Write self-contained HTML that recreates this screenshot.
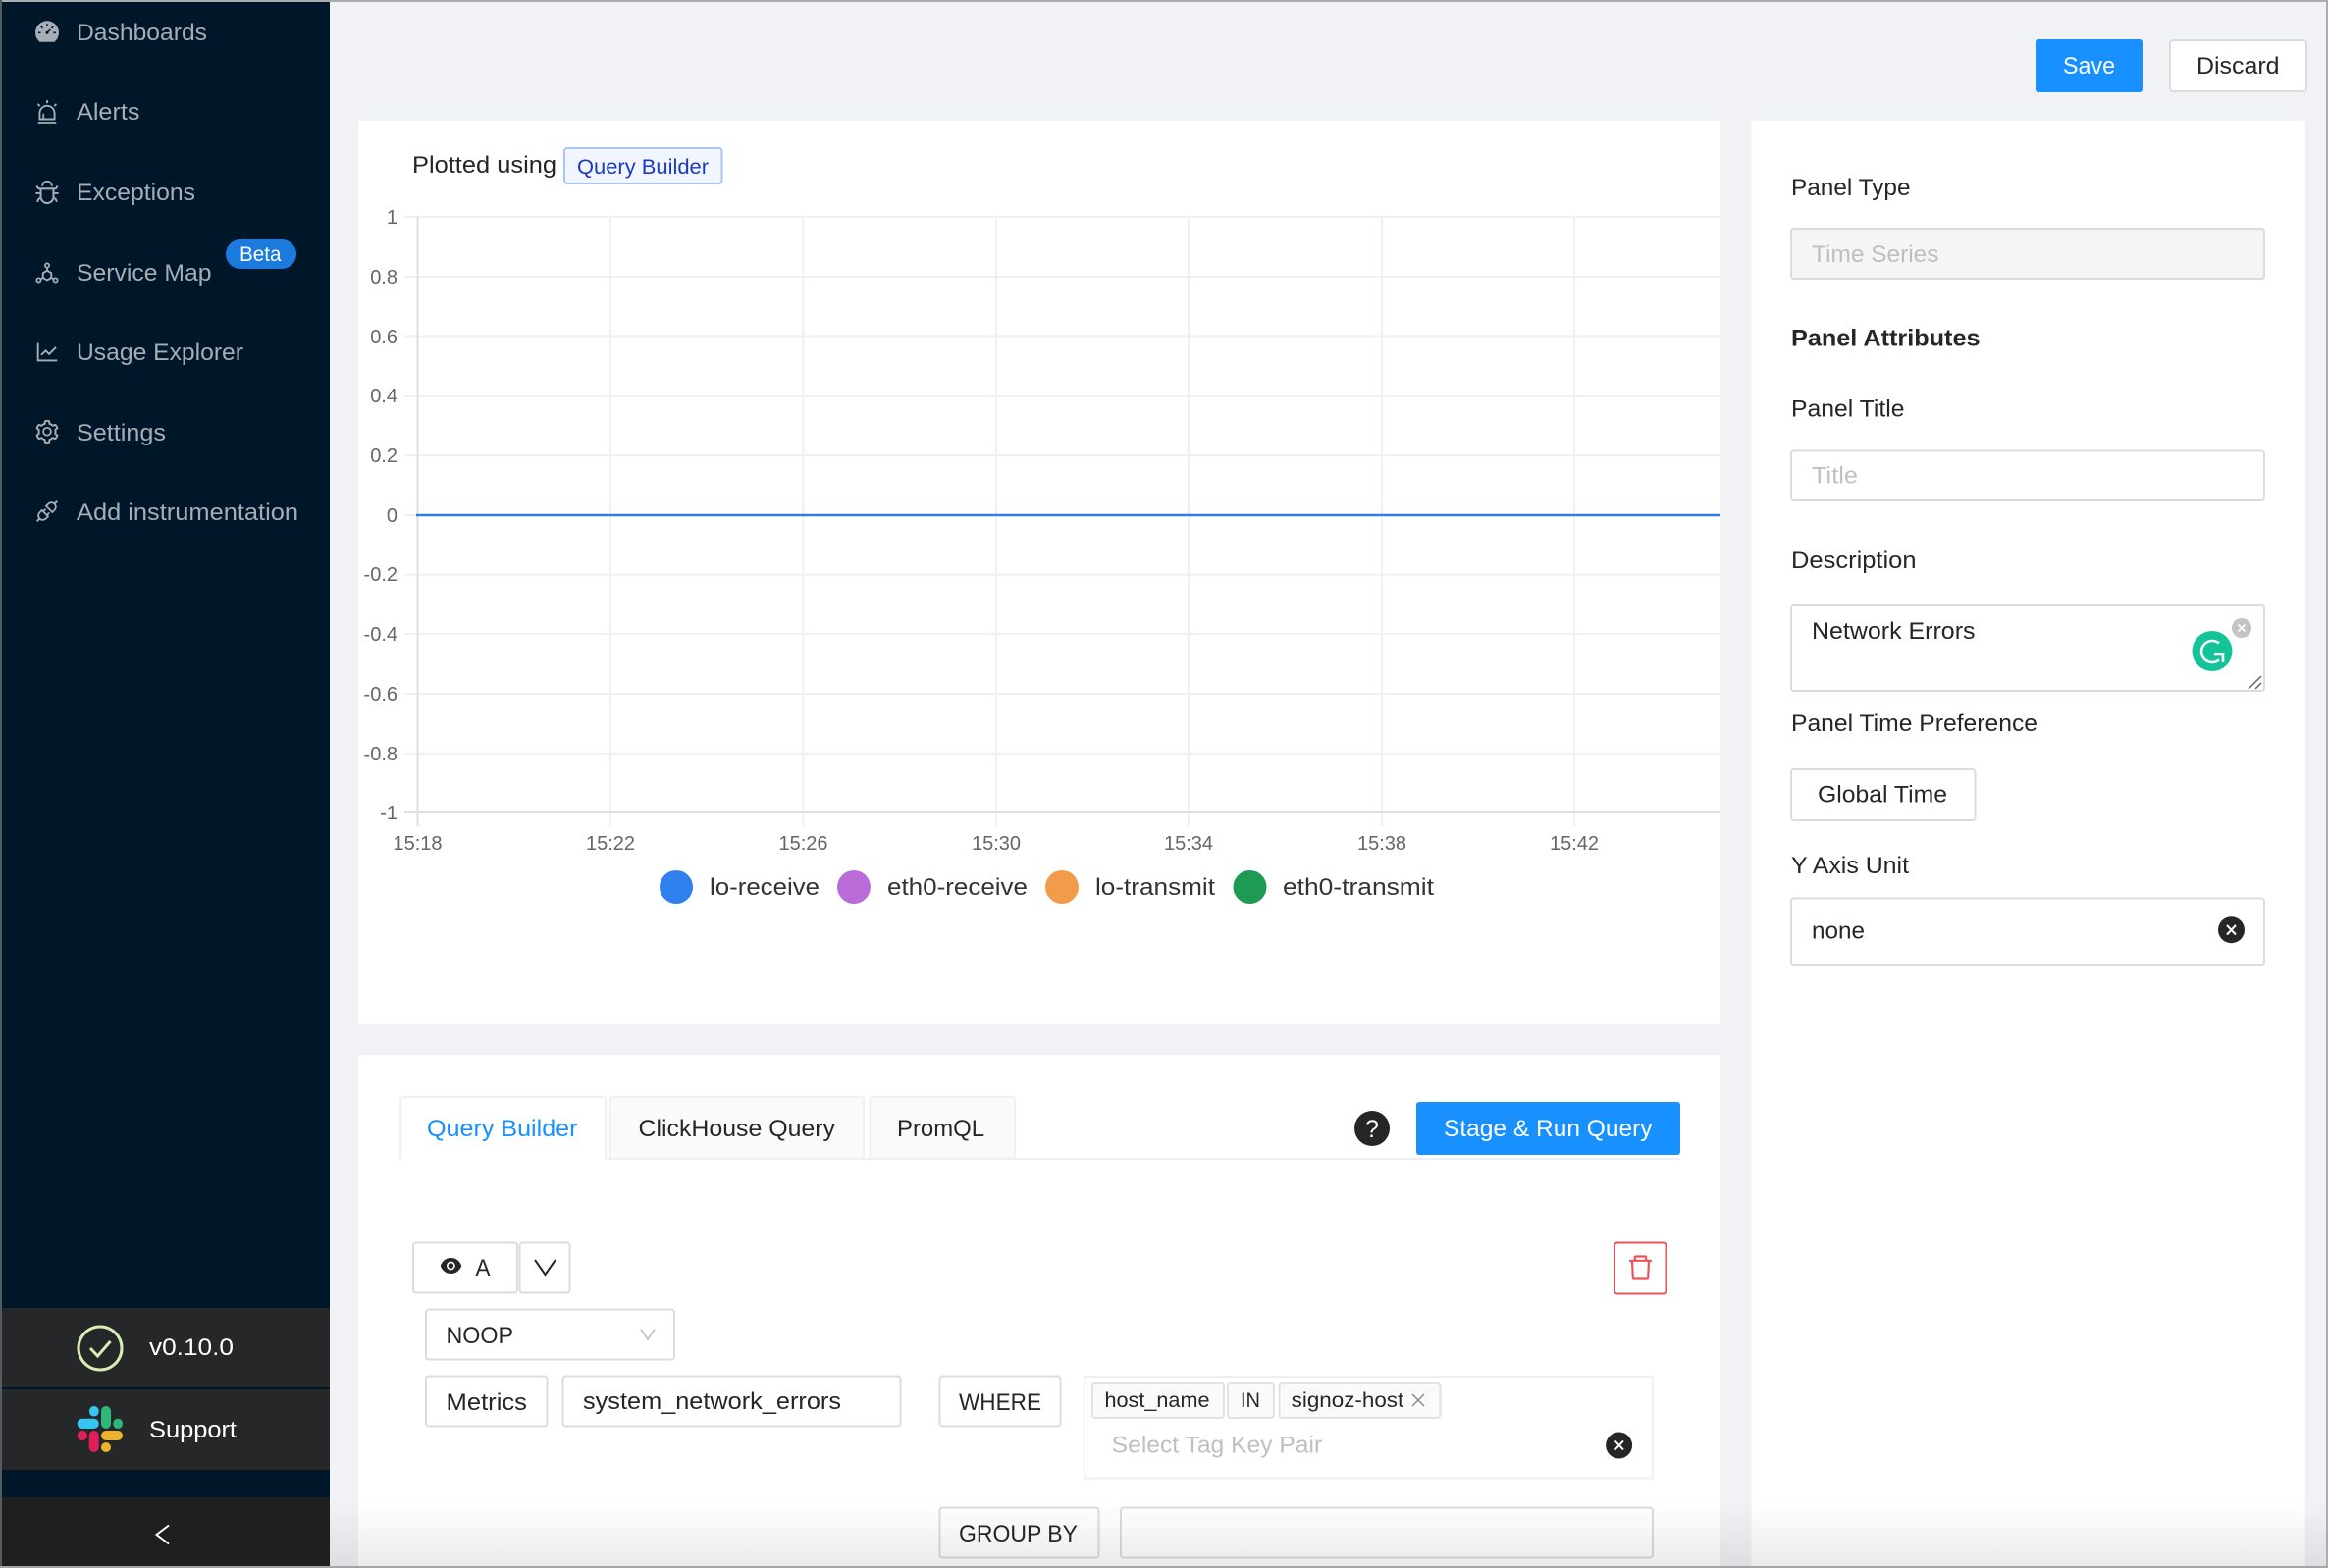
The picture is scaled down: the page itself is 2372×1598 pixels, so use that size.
<!DOCTYPE html>
<html lang="en">
<head>
<meta charset="utf-8">
<title>Panel Editor</title>
<style>
html,body{margin:0;padding:0;width:2372px;height:1598px;overflow:hidden;background:#f0f2f5}
svg{display:block}
text{font-family:"Liberation Sans",sans-serif;font-size:24px;fill:#262626}
.nav{fill:#a6adb4}
.ax{font-size:20px;fill:#666}
.w{fill:#fff}
.ph{fill:#bfbfbf}
.tag{font-size:21.5px}
.b{fill:#fff;stroke:#dcdcdc;stroke-width:2}
.ic{fill:#a6adb4}
</style>
</head>
<body>
<svg xmlns="http://www.w3.org/2000/svg" width="2372" height="1598" viewBox="0 0 2372 1598">
<defs>
<linearGradient id="fade" x1="0" y1="0" x2="0" y2="1"><stop offset="0" stop-color="#000" stop-opacity="0"/><stop offset="1" stop-color="#000" stop-opacity=".08"/></linearGradient>
</defs>
<rect width="2372" height="1598" fill="#f0f2f5"/>

<!-- sidebar -->
<rect x="2" y="2" width="334" height="1594" fill="#00172a"/>
<svg class="ic" x="36" y="20" width="24" height="24" viewBox="64 64 896 896"><path fill-rule="evenodd" d="M924.8 385.6a446.7 446.7 0 00-96-142.4 446.7 446.7 0 00-142.4-96C631.1 123.8 572.5 112 512 112s-119.1 11.8-174.4 35.2a446.7 446.7 0 00-142.4 96 446.7 446.7 0 00-96 142.4C75.8 440.9 64 499.5 64 560c0 132.7 58.3 257.7 159.9 343.1l1.7 1.4c5.8 4.8 13.1 7.5 20.6 7.5h531.7c7.5 0 14.8-2.7 20.6-7.5l1.7-1.4C901.7 817.7 960 692.7 960 560c0-60.5-11.9-119.1-35.2-174.4zM482 232c0-4.4 3.6-8 8-8h44c4.4 0 8 3.6 8 8v80c0 4.4-3.6 8-8 8h-44c-4.4 0-8-3.6-8-8v-80zM270 582c0 4.4-3.6 8-8 8h-80c-4.4 0-8-3.6-8-8v-44c0-4.4 3.6-8 8-8h80c4.4 0 8 3.6 8 8v44zm90.7-204.5l-31.1 31.1a8.03 8.03 0 01-11.3 0L261.7 352a8.03 8.03 0 010-11.3l31.1-31.1c3.1-3.1 8.2-3.1 11.3 0l56.6 56.6c3.1 3.1 3.1 8.2 0 11.3zm291.1 83.6l-84.5 84.5c5 18.7.2 39.4-14.5 54.1a55.95 55.95 0 01-79.2 0 55.95 55.95 0 010-79.2 55.87 55.87 0 0154.1-14.5l84.5-84.5c3.1-3.1 8.2-3.1 11.3 0l28.3 28.3c3.1 3.1 3.1 8.1 0 11.3zm43-52.4l-31.1-31.1a8.03 8.03 0 010-11.3l56.6-56.6c3.1-3.1 8.2-3.1 11.3 0l31.1 31.1c3.1 3.1 3.1 8.2 0 11.3l-56.6 56.6a8.03 8.03 0 01-11.3 0zM846 582c0 4.4-3.6 8-8 8h-80c-4.4 0-8-3.6-8-8v-44c0-4.4 3.6-8 8-8h80c4.4 0 8 3.6 8 8v44z"/></svg>
<svg class="ic" x="36" y="102" width="24" height="24" viewBox="64 64 896 896"><path d="M193 796c0 17.7 14.3 32 32 32h574c17.7 0 32-14.3 32-32V563c0-176.2-142.8-319-319-319S193 386.8 193 563v233zm72-233c0-136.4 110.6-247 247-247s247 110.6 247 247v193H404V585c0-5.5-4.5-10-10-10h-44c-5.5 0-10 4.5-10 10v171h-75V563zm-48.1-252.5l39.6-39.6c3.1-3.1 3.1-8.2 0-11.3l-67.9-67.9a8.03 8.03 0 00-11.3 0l-39.6 39.6a8.03 8.03 0 000 11.3l67.9 67.9c3.1 3.1 8.1 3.1 11.3 0zm669.6-79.2l-39.6-39.6a8.03 8.03 0 00-11.3 0l-67.9 67.9a8.03 8.03 0 000 11.3l39.6 39.6c3.1 3.1 8.2 3.1 11.3 0l67.9-67.9c3.1-3.2 3.1-8.2 0-11.3zM832 892H192c-17.7 0-32 14.3-32 32v24c0 4.4 3.6 8 8 8h688c4.4 0 8-3.6 8-8v-24c0-17.7-14.3-32-32-32zM484 180h56c4.4 0 8-3.6 8-8V76c0-4.4-3.6-8-8-8h-56c-4.4 0-8 3.6-8 8v96c0 4.4 3.6 8 8 8z"/></svg>
<svg class="ic" x="36" y="184" width="24" height="24" viewBox="64 64 896 896"><path d="M304 280h56c4.4 0 8-3.6 8-8 0-28.3 5.9-53.2 17.1-73.5 10.6-19.4 26-34.8 45.4-45.4C450.9 142 475.7 136 504 136h16c28.3 0 53.2 5.9 73.5 17.1 19.4 10.6 34.8 26 45.4 45.4C650 218.9 656 243.7 656 272c0 4.4 3.6 8 8 8h56c4.4 0 8-3.6 8-8 0-40-8.8-76.7-25.9-108.1a184.31 184.31 0 00-74-74C596.7 72.8 560 64 520 64h-16c-40 0-76.7 8.8-108.1 25.9a184.31 184.31 0 00-74 74C304.8 195.3 296 232 296 272c0 4.4 3.6 8 8 8z"/><path d="M940 512H792V412c76.8 0 139-62.2 139-139 0-4.4-3.6-8-8-8h-60c-4.4 0-8 3.6-8 8a63 63 0 01-63 63H232a63 63 0 01-63-63c0-4.4-3.6-8-8-8h-60c-4.4 0-8 3.6-8 8 0 76.8 62.2 139 139 139v100H84c-4.4 0-8 3.6-8 8v56c0 4.4 3.6 8 8 8h148v96c0 6.5.2 13 .7 19.3C164.1 728.6 116 796.7 116 876c0 4.4 3.6 8 8 8h56c4.4 0 8-3.6 8-8 0-44.2 23.9-82.9 59.6-103.7a273 273 0 0022.7 49c24.3 41.5 59 76.2 100.5 100.5S460.5 960 512 960s99.8-13.9 141.3-38.2a281.38 281.38 0 00123.2-149.5A120 120 0 01836 876c0 4.4 3.6 8 8 8h56c4.4 0 8-3.6 8-8 0-79.3-48.1-147.4-116.7-176.7.4-6.4.7-12.8.7-19.3v-96h148c4.4 0 8-3.6 8-8v-56c0-4.4-3.6-8-8-8zM716 680c0 36.8-9.7 72-27.8 102.9-17.7 30.3-43 55.6-73.3 73.3C584 874.3 548.8 884 512 884s-72-9.7-102.9-27.8c-30.3-17.7-55.6-43-73.3-73.3A202.75 202.75 0 01308 680V412h408v268z"/></svg>
<svg class="ic" x="36" y="266" width="24" height="24" viewBox="64 64 896 896"><path d="M888.3 693.2c-42.5-24.6-94.3-18-129.2 12.8l-53-30.7V523.6c0-15.7-8.4-30.3-22-38.1l-136-78.3v-67.1c44.2-15 76-56.8 76-106.1 0-61.9-50.1-112-112-112s-112 50.1-112 112c0 49.3 31.8 91.1 76 106.1v67.1l-136 78.3c-13.6 7.8-22 22.4-22 38.1v151.6l-53 30.7c-34.9-30.8-86.8-37.4-129.2-12.8-53.5 31-71.7 99.4-41 152.9 30.8 53.5 98.9 71.9 152.2 41 42.5-24.6 62.7-73 53.6-118.8l48.7-28.3 140.6 81c6.8 3.9 14.4 5.9 22 5.9s15.2-2 22-5.9L674.5 740l48.7 28.3c-9.1 45.7 11.2 94.2 53.6 118.8 53.3 30.9 121.5 12.6 152.2-41 30.8-53.6 12.6-122-40.7-152.9zm-673 138.4a47.6 47.6 0 01-65.2-17.6c-13.2-22.9-5.4-52.3 17.5-65.5a47.6 47.6 0 0165.2 17.6c13.2 22.9 5.4 52.3-17.5 65.5zM464 234a48.01 48.01 0 0196 0 48.01 48.01 0 01-96 0zm170 446.2l-122 70.3-122-70.3V539.8l122-70.3 122 70.3v140.4zm239 133.9c-13.2 22.9-42.4 30.8-65.2 17.6-22.8-13.2-30.7-42.6-17.5-65.5s42.4-30.8 65.2-17.6c22.9 13.2 30.7 42.5 17.5 65.5z"/></svg>
<svg class="ic" x="36" y="347" width="24" height="24" viewBox="64 64 896 896"><path d="M888 792H200V168c0-4.4-3.6-8-8-8h-56c-4.4 0-8 3.6-8 8v688c0 4.4 3.6 8 8 8h752c4.4 0 8-3.6 8-8v-56c0-4.4-3.6-8-8-8zM305.8 637.7c3.1 3.1 8.1 3.1 11.3 0l138.3-137.6L583 628.5c3.1 3.1 8.2 3.1 11.3 0l275.4-275.3c3.1-3.1 3.1-8.2 0-11.3l-39.6-39.6a8.03 8.03 0 00-11.3 0l-230 229.9L461.4 404a8.03 8.03 0 00-11.3 0L266.3 586.7a8.03 8.03 0 000 11.3l39.5 39.7z"/></svg>
<svg class="ic" x="36" y="428" width="24" height="24" viewBox="64 64 896 896"><path d="M924.8 625.7l-65.5-56c3.1-19 4.7-38.4 4.7-57.8s-1.6-38.8-4.7-57.8l65.5-56a32.03 32.03 0 009.3-35.2l-.9-2.6a443.74 443.74 0 00-79.7-137.9l-1.8-2.1a32.12 32.12 0 00-35.1-9.5l-81.3 28.9c-30-24.6-63.5-44-99.7-57.6l-15.7-85a32.05 32.05 0 00-25.8-25.7l-2.7-.5c-52.1-9.4-106.9-9.4-159 0l-2.7.5a32.05 32.05 0 00-25.8 25.7l-15.8 85.4a351.86 351.86 0 00-99 57.4l-81.9-29.1a32 32 0 00-35.1 9.5l-1.8 2.1a446.02 446.02 0 00-79.7 137.9l-.9 2.6c-4.5 12.5-.8 26.5 9.3 35.2l66.3 56.6c-3.1 18.8-4.6 38-4.6 57.1 0 19.2 1.5 38.4 4.6 57.1L99 625.5a32.03 32.03 0 00-9.3 35.2l.9 2.6c18.1 50.4 44.9 96.9 79.7 137.9l1.8 2.1a32.12 32.12 0 0035.1 9.5l81.9-29.1c29.8 24.5 63.1 43.9 99 57.4l15.8 85.4a32.05 32.05 0 0025.8 25.7l2.7.5a449.4 449.4 0 00159 0l2.7-.5a32.05 32.05 0 0025.8-25.7l15.7-85a350 350 0 0099.7-57.6l81.3 28.9a32 32 0 0035.1-9.5l1.8-2.1c34.8-41.1 61.6-87.5 79.7-137.9l.9-2.6c4.5-12.3.8-26.3-9.3-35zM788.3 465.9c2.5 15.1 3.8 30.6 3.8 46.1s-1.3 31-3.8 46.1l-6.6 40.1 74.7 63.9a370.03 370.03 0 01-42.6 73.6L721 702.8l-31.4 25.8c-23.9 19.6-50.5 35-79.3 45.8l-38.1 14.3-17.9 97a377.5 377.5 0 01-85 0l-17.9-97.2-37.8-14.5c-28.5-10.8-55-26.2-78.7-45.7l-31.4-25.9-93.4 33.2c-17-22.9-31.2-47.6-42.6-73.6l75.5-64.5-6.5-40c-2.4-14.9-3.7-30.3-3.7-45.5 0-15.3 1.2-30.6 3.7-45.5l6.5-40-75.5-64.5c11.3-26.1 25.6-50.7 42.6-73.6l93.4 33.2 31.4-25.9c23.7-19.5 50.2-34.9 78.7-45.7l37.9-14.3 17.9-97.2c28.1-3.2 56.8-3.2 85 0l17.9 97 38.1 14.3c28.7 10.8 55.4 26.2 79.3 45.8l31.4 25.8 92.8-32.9c17 22.9 31.2 47.6 42.6 73.6L781.8 426l6.5 39.9zM512 326c-97.2 0-176 78.8-176 176s78.8 176 176 176 176-78.8 176-176-78.8-176-176-176zm79.2 255.2A111.6 111.6 0 01512 614c-29.9 0-58-11.7-79.2-32.8A111.6 111.6 0 01400 502c0-29.9 11.7-58 32.8-79.2C454 401.6 482.1 390 512 390c29.9 0 58 11.6 79.2 32.8A111.6 111.6 0 01624 502c0 29.9-11.7 58-32.8 79.2z"/></svg>
<svg class="ic" x="36" y="509" width="24" height="24" viewBox="64 64 896 896"><path d="M917.7 148.8l-42.4-42.4c-1.6-1.6-3.6-2.3-5.7-2.3s-4.1.8-5.7 2.3l-76.1 76.1a199.27 199.27 0 00-112.1-34.3c-51.2 0-102.4 19.5-141.5 58.6L432.3 308.7a8.03 8.03 0 000 11.3L704 591.7c1.6 1.6 3.6 2.3 5.7 2.3 2 0 4.1-.8 5.7-2.3l101.9-101.9c68.9-69 77-175.7 24.3-253.5l76.1-76.1c3.1-3.2 3.1-8.3 0-11.4zM769.1 441.7l-59.4 59.4-186.8-186.8 59.4-59.4c24.9-24.9 58.1-38.7 93.4-38.7 35.3 0 68.4 13.7 93.4 38.7 24.9 24.9 38.7 58.1 38.7 93.4 0 35.3-13.8 68.4-38.7 93.4zm-190.2 105a8.03 8.03 0 00-11.3 0L501 613.3 410.7 523l66.7-66.7c3.1-3.1 3.1-8.2 0-11.3L441 408.6a8.03 8.03 0 00-11.3 0L363 475.3l-43-43a7.85 7.85 0 00-5.7-2.3c-2 0-4.1.8-5.7 2.3L206.8 534.2c-68.9 69-77 175.7-24.3 253.5l-76.1 76.1a8.03 8.03 0 000 11.3l42.4 42.4c1.6 1.6 3.6 2.3 5.7 2.3s4.1-.8 5.7-2.3l76.1-76.1c33.7 22.9 72.9 34.3 112.1 34.3 51.2 0 102.4-19.5 141.5-58.6l101.9-101.9c3.1-3.1 3.1-8.2 0-11.3l-43-43 66.7-66.7c3.1-3.1 3.1-8.2 0-11.3l-36.6-36.2zM441.7 769.1a131.32 131.32 0 01-93.4 38.7c-35.3 0-68.4-13.7-93.4-38.7a131.32 131.32 0 01-38.7-93.4c0-35.3 13.7-68.4 38.7-93.4l59.4-59.4 186.8 186.8-59.4 59.4z"/></svg>

<text class="nav" x="78" y="41" textLength="133" lengthAdjust="spacingAndGlyphs">Dashboards</text>
<text class="nav" x="78" y="122" textLength="64.5" lengthAdjust="spacingAndGlyphs">Alerts</text>
<text class="nav" x="78" y="204" textLength="121" lengthAdjust="spacingAndGlyphs">Exceptions</text>
<text class="nav" x="78" y="286" textLength="137.5" lengthAdjust="spacingAndGlyphs">Service Map</text>
<text class="nav" x="78" y="367" textLength="170" lengthAdjust="spacingAndGlyphs">Usage Explorer</text>
<text class="nav" x="78" y="449" textLength="91" lengthAdjust="spacingAndGlyphs">Settings</text>
<text class="nav" x="78" y="530" textLength="226" lengthAdjust="spacingAndGlyphs">Add instrumentation</text>

<rect x="230" y="244" width="72" height="30" rx="15" fill="#1a7ade"/>
<text class="w" x="244" y="266" textLength="42.5" lengthAdjust="spacingAndGlyphs" style="font-size:21px">Beta</text>

<rect x="2" y="1333" width="334" height="81" fill="#262728"/>
<rect x="2" y="1416" width="334" height="82" fill="#262728"/>
<rect x="2" y="1526" width="334" height="70" fill="#1f1f1f"/>
<circle cx="102" cy="1374" r="22" fill="none" stroke="#d6eeb6" stroke-width="3"/>
<path d="M92 1374l7.5 8 13-15" fill="none" stroke="#d6eeb6" stroke-width="3"/>
<text class="w" x="152" y="1381" textLength="86" lengthAdjust="spacingAndGlyphs">v0.10.0</text>
<rect x="78.7" y="1445.7" width="22" height="10.3" rx="5" fill="#36c5f0"/>
<rect x="91" y="1433" width="9.7" height="10.5" rx="4.8" fill="#36c5f0"/>
<rect x="103" y="1433" width="10" height="23" rx="5" fill="#2eb67d"/>
<rect x="115.3" y="1445.7" width="9.7" height="10.3" rx="4.8" fill="#2eb67d"/>
<rect x="103" y="1458" width="22" height="10" rx="5" fill="#ecb22e"/>
<rect x="103" y="1470" width="10" height="10" rx="5" fill="#ecb22e"/>
<rect x="90.7" y="1458" width="10" height="22" rx="5" fill="#e01e5a"/>
<rect x="78.7" y="1458" width="10.3" height="10" rx="5" fill="#e01e5a"/>
<text class="w" x="152" y="1465" textLength="89" lengthAdjust="spacingAndGlyphs">Support</text>
<path d="M172 1554.500l-12.500 9.500 12.500 9.500" fill="none" stroke="#fff" stroke-width="2"/>

<!-- top actions -->
<rect x="2074" y="40" width="109" height="54" rx="3" fill="#1890ff"/>
<text class="w" x="2102" y="75" textLength="53" lengthAdjust="spacingAndGlyphs">Save</text>
<rect class="b" x="2211" y="41" width="139" height="52" rx="3"/>
<text x="2238" y="75" textLength="84.5" lengthAdjust="spacingAndGlyphs">Discard</text>

<!-- chart panel -->
<rect x="365" y="123" width="1388" height="921" fill="#fff"/>
<text x="420" y="176" textLength="147" lengthAdjust="spacingAndGlyphs">Plotted using</text>
<rect x="575" y="151" width="160.5" height="36" rx="3" fill="#f0f5ff" stroke="#a9c4f5" stroke-width="2"/>
<text class="tag" x="588" y="177" textLength="134" lengthAdjust="spacingAndGlyphs" style="fill:#1d39c4">Query Builder</text>

<g stroke="#f0f0f0" stroke-width="2">
<path d="M412 221H1752M412 282H1752M412 342.500H1752M412 404H1752M412 464H1752M412 525H425M412 585.500H1752M412 646H1752M412 707H1752M412 768H1752"/>
<path d="M622 221V842M818.500 221V842M1015 221V842M1211 221V842M1408 221V842M1604 221V842"/>
</g>
<path d="M425.500 221V842M412 828H1752" stroke="#dfdfdf" stroke-width="2" fill="none"/>
<path d="M424 525H1752" stroke="#2f7fe0" stroke-width="2.500"/>

<g>
<text class="ax" x="405" y="228" text-anchor="end">1</text>
<text class="ax" x="405" y="289" text-anchor="end">0.8</text>
<text class="ax" x="405" y="350" text-anchor="end">0.6</text>
<text class="ax" x="405" y="410" text-anchor="end">0.4</text>
<text class="ax" x="405" y="471" text-anchor="end">0.2</text>
<text class="ax" x="405" y="532" text-anchor="end">0</text>
<text class="ax" x="405" y="592" text-anchor="end">-0.2</text>
<text class="ax" x="405" y="653" text-anchor="end">-0.4</text>
<text class="ax" x="405" y="714" text-anchor="end">-0.6</text>
<text class="ax" x="405" y="775" text-anchor="end">-0.8</text>
<text class="ax" x="405" y="835" text-anchor="end">-1</text>
</g>
<text class="ax" x="425.5" y="866" text-anchor="middle">15:18</text>
<text class="ax" x="622" y="866" text-anchor="middle">15:22</text>
<text class="ax" x="818.5" y="866" text-anchor="middle">15:26</text>
<text class="ax" x="1015" y="866" text-anchor="middle">15:30</text>
<text class="ax" x="1211" y="866" text-anchor="middle">15:34</text>
<text class="ax" x="1408" y="866" text-anchor="middle">15:38</text>
<text class="ax" x="1604" y="866" text-anchor="middle">15:42</text>

<circle cx="689" cy="904" r="17" fill="#2f7fed"/>
<text x="723" y="912" textLength="112" lengthAdjust="spacingAndGlyphs" style="fill:#333">lo-receive</text>
<circle cx="870" cy="904" r="17" fill="#b96cd8"/>
<text x="904" y="912" textLength="143" lengthAdjust="spacingAndGlyphs" style="fill:#333">eth0-receive</text>
<circle cx="1082" cy="904" r="17" fill="#f29b4a"/>
<text x="1116" y="912" textLength="122" lengthAdjust="spacingAndGlyphs" style="fill:#333">lo-transmit</text>
<circle cx="1273.5" cy="904" r="17" fill="#1f9a55"/>
<text x="1307" y="912" textLength="154" lengthAdjust="spacingAndGlyphs" style="fill:#333">eth0-transmit</text>

<!-- query panel -->
<rect x="365" y="1075" width="1388" height="521" fill="#fff"/>
<path d="M408 1181H1712" stroke="#f0f0f0" stroke-width="2"/>
<rect x="408" y="1118" width="209" height="70" rx="3" fill="#fff" stroke="#f0f0f0" stroke-width="2"/>
<rect x="402" y="1182" width="218" height="8" fill="#fff"/>
<rect x="622" y="1118" width="258" height="63" rx="3" fill="#fafafa" stroke="#f0f0f0" stroke-width="2"/>
<rect x="886.5" y="1118" width="147.5" height="63" rx="3" fill="#fafafa" stroke="#f0f0f0" stroke-width="2"/>
<text x="435" y="1158" textLength="153.5" lengthAdjust="spacingAndGlyphs" style="fill:#1890ff">Query Builder</text>
<text x="650.5" y="1158" textLength="200.5" lengthAdjust="spacingAndGlyphs">ClickHouse Query</text>
<text x="914" y="1158" textLength="89" lengthAdjust="spacingAndGlyphs">PromQL</text>
<circle cx="1398" cy="1150" r="18" fill="#262626"/>
<text class="w" x="1398" y="1159" text-anchor="middle" style="font-size:25px">?</text>
<rect x="1443" y="1123" width="269" height="54" rx="3" fill="#1890ff"/>
<text class="w" x="1471" y="1158" textLength="212.5" lengthAdjust="spacingAndGlyphs">Stage &amp; Run Query</text>

<rect class="b" x="421" y="1266.5" width="106" height="51" rx="3"/>
<svg x="448.5" y="1279" width="22" height="22" viewBox="64 64 896 896"><path fill="#262626" d="M396 512a112 112 0 10224 0 112 112 0 10-224 0zm546.2-25.8C847.4 286.5 704.1 186 512 186c-192.2 0-335.4 100.5-430.2 300.3a60.3 60.3 0 000 51.5C176.6 737.5 319.9 838 512 838c192.2 0 335.4-100.5 430.2-300.3 7.7-16.2 7.7-35 0-51.5zM508 688c-97.2 0-176-78.8-176-176s78.8-176 176-176 176 78.8 176 176-78.8 176-176 176z"/></svg>
<text x="484.5" y="1300" textLength="15" lengthAdjust="spacingAndGlyphs">A</text>
<rect class="b" x="529.5" y="1266.5" width="51" height="51" rx="3"/>
<path d="M545 1284l10.500 15 10.500-15" fill="none" stroke="#262626" stroke-width="2"/>
<rect x="1645" y="1266.5" width="52.5" height="52" rx="3" fill="#fff" stroke="#e8545a" stroke-width="2"/>
<svg x="1656" y="1276" width="31" height="31" viewBox="0 0 1024 1024"><path fill="#e8545a" d="M360 184h-8c4.4 0 8-3.6 8-8v8h304v-8c0 4.4 3.6 8 8 8h-8v72h72v-80c0-35.3-28.7-64-64-64H352c-35.3 0-64 28.700-64 64v80h72v-72zm504 72H160c-17.700 0-32 14.300-32 32v32c0 4.400 3.600 8 8 8h60.400l24.700 523c1.600 34.100 29.800 61 63.900 61h454c34.200 0 62.300-26.800 63.900-61l24.700-523H888c4.400 0 8-3.600 8-8v-32c0-17.700-14.300-32-32-32zM731.300 840H292.700l-24.200-512h487l-24.200 512z"/></svg>

<rect class="b" x="434" y="1334.5" width="253" height="51" rx="3"/>
<text x="454.5" y="1369" textLength="68.5" lengthAdjust="spacingAndGlyphs">NOOP</text>
<path d="M653 1354.500l7 10.500 7-10.500" fill="none" stroke="#bfbfbf" stroke-width="1.600"/>

<rect class="b" x="434" y="1402.5" width="123.5" height="51" rx="3"/>
<text x="454.5" y="1437" textLength="82.5" lengthAdjust="spacingAndGlyphs">Metrics</text>
<rect class="b" x="573.5" y="1402.5" width="344" height="51" rx="3"/>
<text x="594" y="1436" textLength="263" lengthAdjust="spacingAndGlyphs">system_network_errors</text>
<rect class="b" x="957.5" y="1402.5" width="123" height="51" rx="3"/>
<text x="977" y="1437" textLength="84" lengthAdjust="spacingAndGlyphs">WHERE</text>

<rect x="1105" y="1403" width="579" height="103.5" fill="#fff" stroke="#f0f0f0" stroke-width="2"/>
<rect x="1113" y="1409" width="134" height="36" rx="3" fill="#fafafa" stroke="#e2e2e2" stroke-width="2"/>
<text class="tag" x="1125.5" y="1434" textLength="107" lengthAdjust="spacingAndGlyphs">host_name</text>
<rect x="1251" y="1409" width="47" height="36" rx="3" fill="#fafafa" stroke="#e2e2e2" stroke-width="2"/>
<text class="tag" x="1264" y="1434" textLength="20" lengthAdjust="spacingAndGlyphs">IN</text>
<rect x="1303.5" y="1409" width="164" height="36" rx="3" fill="#fafafa" stroke="#e2e2e2" stroke-width="2"/>
<text class="tag" x="1315.7" y="1434" textLength="114.5" lengthAdjust="spacingAndGlyphs">signoz-host</text>
<path d="M1439 1421l12 12M1451 1421l-12 12" stroke="#8c8c8c" stroke-width="1.500"/>
<text class="ph" x="1132.7" y="1480.5" textLength="214.5" lengthAdjust="spacingAndGlyphs">Select Tag Key Pair</text>
<circle cx="1649.6" cy="1473" r="13.5" fill="#262626"/>
<path d="M1645.500 1468.500l8.500 9M1654 1468.500l-8.500 9" stroke="#fff" stroke-width="2"/>

<rect class="b" x="957.5" y="1536.5" width="162" height="51" rx="3"/>
<text x="977" y="1571" textLength="121" lengthAdjust="spacingAndGlyphs">GROUP BY</text>
<rect class="b" x="1142" y="1536.5" width="542" height="51" rx="3"/>

<!-- right panel -->
<rect x="1784.5" y="123" width="564.5" height="1473" fill="#fff"/>
<text x="1825" y="199" textLength="121.5" lengthAdjust="spacingAndGlyphs">Panel Type</text>
<rect x="1825" y="233" width="482" height="51" rx="3" fill="#f5f5f5" stroke="#dcdcdc" stroke-width="2"/>
<text class="ph" x="1846" y="267" textLength="129.5" lengthAdjust="spacingAndGlyphs">Time Series</text>
<text x="1825" y="352.5" textLength="192.5" lengthAdjust="spacingAndGlyphs" style="font-weight:bold">Panel Attributes</text>
<text x="1825" y="424.5" textLength="115.5" lengthAdjust="spacingAndGlyphs">Panel Title</text>
<rect class="b" x="1825" y="459.5" width="482" height="50.5" rx="3"/>
<text class="ph" x="1846" y="492.5" textLength="47" lengthAdjust="spacingAndGlyphs">Title</text>
<text x="1825" y="579" textLength="127.5" lengthAdjust="spacingAndGlyphs">Description</text>
<rect class="b" x="1825" y="617" width="482" height="87" rx="3"/>
<text x="1846" y="651" textLength="166.5" lengthAdjust="spacingAndGlyphs">Network Errors</text>
<circle cx="2254" cy="663.5" r="20.5" fill="#15c39a"/>
<path d="M2261 655.500A11 11 0 1 0 2261 672.500" fill="none" stroke="#fff" stroke-width="2.500"/>
<path d="M2256 667h9v8" fill="none" stroke="#fff" stroke-width="2.500"/>
<circle cx="2284" cy="640" r="10" fill="#c4c4c4"/>
<path d="M2280.500 636.500l7 7M2287.500 636.500l-7 7" stroke="#fff" stroke-width="1.800"/>
<path d="M2291 702l13-13M2298 702l6-6" stroke="#666" stroke-width="1.500"/>
<text x="1825" y="745" textLength="251" lengthAdjust="spacingAndGlyphs">Panel Time Preference</text>
<rect class="b" x="1825" y="784" width="187.5" height="52" rx="3"/>
<text x="1852" y="817.5" textLength="132" lengthAdjust="spacingAndGlyphs">Global Time</text>
<text x="1825" y="890" textLength="120" lengthAdjust="spacingAndGlyphs">Y Axis Unit</text>
<rect class="b" x="1825" y="915.5" width="482" height="67.5" rx="3"/>
<text x="1846" y="956.5" textLength="54" lengthAdjust="spacingAndGlyphs">none</text>
<circle cx="2273.5" cy="947.7" r="13.5" fill="#262626"/>
<path d="M2269 943l9 9.500M2278 943l-9 9.500" stroke="#fff" stroke-width="2"/>

<!-- bottom fade and screenshot edge -->
<rect x="336" y="1530" width="2034" height="66" fill="url(#fade)"/>
<rect x="0" y="0" width="2372" height="2" fill="#a9acb0"/>
<rect x="0" y="0" width="2" height="1598" fill="#565b61"/>
<rect x="2370" y="0" width="2" height="1598" fill="#a9acb0"/>
<rect x="0" y="1596" width="2372" height="2" fill="#a4a4a4"/>
</svg>
</body>
</html>
